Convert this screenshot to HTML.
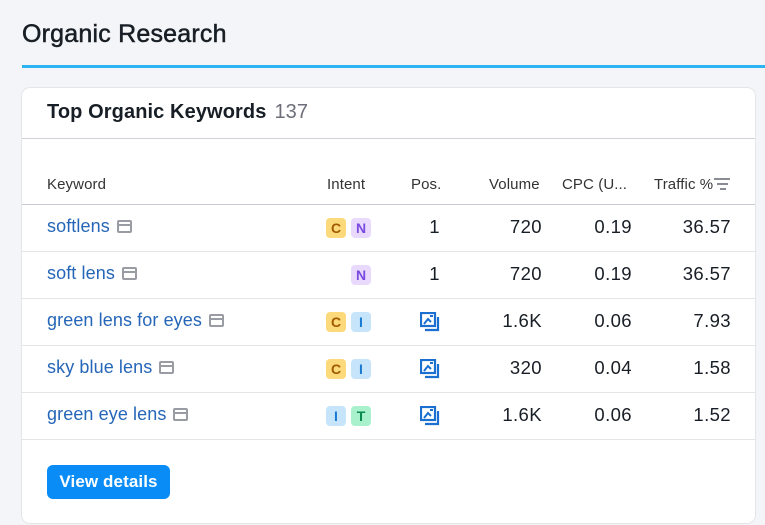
<!DOCTYPE html><html><head><style>
body{margin:0;width:765px;height:525px;background:#f4f5f9;font-family:"Liberation Sans",sans-serif;position:relative;overflow:hidden}
.h1{position:absolute;left:22px;top:20px;font-size:25px;color:#181e25;-webkit-text-stroke:0.5px #181e25;letter-spacing:0.2px}
.bl{position:absolute;left:22px;right:0;top:65px;height:3px;background:#2bb3f2}
.card{position:absolute;left:22px;top:88px;width:733px;height:435px;background:#fff;border-radius:8px;box-shadow:0 0 0 1px #e4e6ea}
.t{position:absolute;left:25px;top:13px;font-size:20px;font-weight:bold;color:#181e25;letter-spacing:0.1px}
.t span{font-weight:normal;color:#6c6e79;margin-left:8px}
.hl{position:absolute;left:0;right:0;top:50px;height:1px;background:#cfd2d8}
.th{position:absolute;top:88px;font-size:15px;color:#333;letter-spacing:0.1px}
.ln{position:absolute;left:0;right:0;height:1px;background:#e3e5e9}
.kw{position:absolute;left:25px;font-size:18px;color:#2566b8;letter-spacing:0.1px}
.ic{display:inline-block;width:15px;height:13px;border:2px solid #9a9ca4;border-radius:2px;vertical-align:-1px;margin-left:7px;box-sizing:border-box;background:linear-gradient(#9a9ca4,#9a9ca4) 0 2px/100% 2px no-repeat}
.b{position:absolute;width:20px;height:20px;border-radius:4px;font-size:14px;font-weight:bold;text-align:center;line-height:20px}
.C{background:#fcd97a;color:#a05a00}.N{background:#e8d9fd;color:#7a4ae0}.I{background:#c6e5fb;color:#1a7ad0}.T{background:#a9f0cc;color:#0b8a4e}
.n{position:absolute;font-size:18.5px;color:#181e25;text-align:right;letter-spacing:0.4px}
.btn{position:absolute;left:25px;top:377px;width:123px;height:34px;background:#0a8cf6;border-radius:6px;color:#fff;font-weight:bold;font-size:17px;line-height:34px;text-align:center;letter-spacing:0.1px}
</style></head><body>
<div class="h1">Organic Research</div><div class="bl"></div>
<div class="card">
<div class="t">Top Organic Keywords<span>137</span></div><div class="hl"></div>
<div class="th" style="left:25px">Keyword</div><div class="th" style="left:305px">Intent</div><div class="th" style="left:389px">Pos.</div><div class="th" style="left:467px">Volume</div><div class="th" style="left:540px">CPC (U...</div><div class="th" style="left:632px">Traffic %<svg width="16" height="12" style="position:absolute;left:60px;top:2px"><path d="M0 1h16M3 6h11M6 11h6" stroke="#8a8c94" stroke-width="2"/></svg></div>
<div class="ln" style="top:116px;background:#c8cbd1"></div>
<div class="ln" style="top:163px"></div><div class="ln" style="top:210px"></div><div class="ln" style="top:257px"></div><div class="ln" style="top:304px"></div><div class="ln" style="top:351px"></div>
<div class="kw" style="top:128px">softlens<i class="ic"></i></div>
<div class="kw" style="top:175px">soft lens<i class="ic"></i></div>
<div class="kw" style="top:222px">green lens for eyes<i class="ic"></i></div>
<div class="kw" style="top:269px">sky blue lens<i class="ic"></i></div>
<div class="kw" style="top:316px">green eye lens<i class="ic"></i></div>
<div class="b C" style="left:304px;top:130px">C</div><div class="b N" style="left:329px;top:130px">N</div>
<div class="b N" style="left:329px;top:177px">N</div>
<div class="b C" style="left:304px;top:224px">C</div><div class="b I" style="left:329px;top:224px">I</div>
<div class="b C" style="left:304px;top:271px">C</div><div class="b I" style="left:329px;top:271px">I</div>
<div class="b I" style="left:304px;top:318px">I</div><div class="b T" style="left:329px;top:318px">T</div>
<div class="n" style="left:380px;width:38px;top:128px">1</div><div class="n" style="left:380px;width:38px;top:175px">1</div>
<svg style="position:absolute;left:398px;top:224px" width="20" height="20"><rect x="1" y="1" width="14" height="13" fill="none" stroke="#1a6fd0" stroke-width="2.2"/><path d="M4 12l4-5 3 3M10 4h3" stroke="#1a6fd0" stroke-width="2" fill="none"/><path d="M18 5v13H5" stroke="#1a6fd0" stroke-width="2.2" fill="none"/></svg>
<svg style="position:absolute;left:398px;top:271px" width="20" height="20"><rect x="1" y="1" width="14" height="13" fill="none" stroke="#1a6fd0" stroke-width="2.2"/><path d="M4 12l4-5 3 3M10 4h3" stroke="#1a6fd0" stroke-width="2" fill="none"/><path d="M18 5v13H5" stroke="#1a6fd0" stroke-width="2.2" fill="none"/></svg>
<svg style="position:absolute;left:398px;top:318px" width="20" height="20"><rect x="1" y="1" width="14" height="13" fill="none" stroke="#1a6fd0" stroke-width="2.2"/><path d="M4 12l4-5 3 3M10 4h3" stroke="#1a6fd0" stroke-width="2" fill="none"/><path d="M18 5v13H5" stroke="#1a6fd0" stroke-width="2.2" fill="none"/></svg>
<div class="n" style="left:440px;width:80px;top:128px">720</div><div class="n" style="left:440px;width:80px;top:175px">720</div><div class="n" style="left:440px;width:80px;top:222px">1.6K</div><div class="n" style="left:440px;width:80px;top:269px">320</div><div class="n" style="left:440px;width:80px;top:316px">1.6K</div>
<div class="n" style="left:530px;width:80px;top:128px">0.19</div><div class="n" style="left:530px;width:80px;top:175px">0.19</div><div class="n" style="left:530px;width:80px;top:222px">0.06</div><div class="n" style="left:530px;width:80px;top:269px">0.04</div><div class="n" style="left:530px;width:80px;top:316px">0.06</div>
<div class="n" style="left:620px;width:89px;top:128px">36.57</div><div class="n" style="left:620px;width:89px;top:175px">36.57</div><div class="n" style="left:620px;width:89px;top:222px">7.93</div><div class="n" style="left:620px;width:89px;top:269px">1.58</div><div class="n" style="left:620px;width:89px;top:316px">1.52</div>
<div class="btn">View details</div>
</div>
</body></html>
